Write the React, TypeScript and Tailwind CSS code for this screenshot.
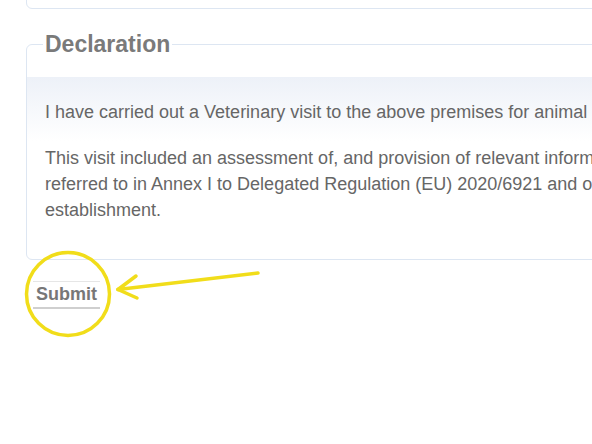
import React from "react";

export default function App() {
  return (
    <div className="relative w-[592px] h-[444px] overflow-hidden bg-white font-['Liberation_Sans',Arial,sans-serif]">
      <div className="ml-[26px] -mt-[20px] h-[29px] w-[800px] rounded-md border border-[#dde6f2]" />
      <fieldset className="ml-[26px] mt-[24px] w-[800px] rounded-md border border-[#dde6f2] pb-[36px]">
        <legend className="ml-[16px] px-[2px] text-[23px] font-bold leading-[23px] text-[#7a7a7a]">
          Declaration
        </legend>
        <div className="mt-[21px] bg-[linear-gradient(to_bottom,#edf1f8,#ffffff_64px)] pt-[22px] pl-[18px] text-[18px] leading-[26px] text-[#666]">
          <p className="whitespace-nowrap">
            I have carried out a Veterinary visit to the above premises for animal health.
          </p>
          <p className="mt-[20px] whitespace-nowrap">
            This visit included an assessment of, and provision of relevant information
            <br />
            referred to in Annex I to Delegated Regulation (EU) 2020/6921 and other
            <br />
            establishment.
          </p>
        </div>
      </fieldset>
      <button className="ml-[33px] mt-[21px] border-t border-b-2 border-t-[#e6e6e6] border-b-[#cfcfcf] px-[3px] text-[18px] font-bold leading-[25px] text-[#777]">
        Submit
      </button>
      <svg className="pointer-events-none absolute left-0 top-0" width="592" height="444" viewBox="0 0 592 444">
        <circle cx="68" cy="294" r="41.5" fill="none" stroke="#f1dd1a" strokeWidth="3.5" />
        <g stroke="#f1dd1a" strokeWidth="3.5" strokeLinecap="round" fill="none">
          <line x1="258" y1="273" x2="118" y2="289.5" />
          <line x1="118" y1="289.5" x2="136" y2="276" />
          <line x1="118" y1="289.5" x2="137" y2="298" />
        </g>
      </svg>
    </div>
  );
}
